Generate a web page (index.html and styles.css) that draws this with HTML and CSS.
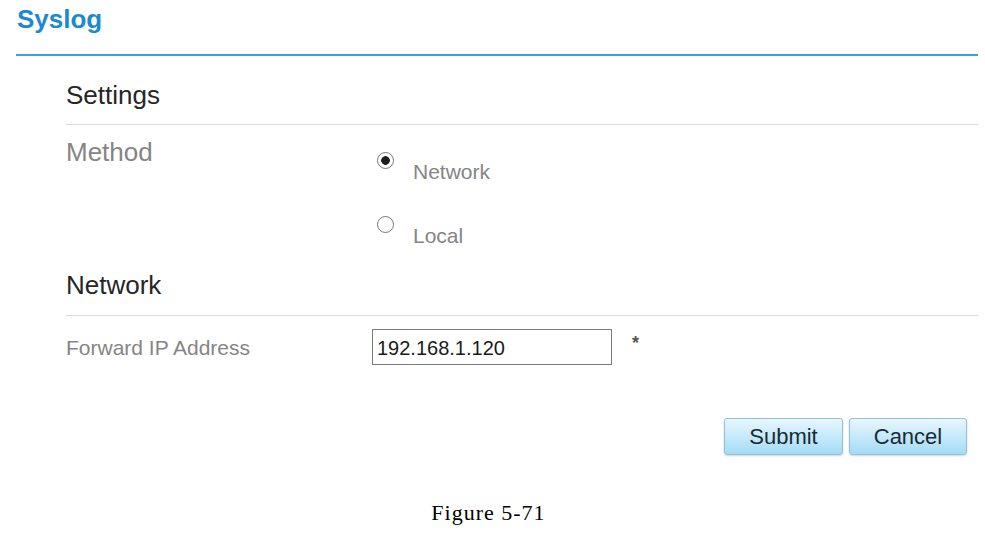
FILE: index.html
```html
<!DOCTYPE html>
<html lang="en">
<head>
<meta charset="utf-8">
<title>Syslog</title>
<link rel="stylesheet" href="styles.css">
</head>
<body>
<div class="page">
  <header class="title-bar">
    <h1 class="page-title">Syslog</h1>
  </header>
  <main class="content">
    <h2 class="section-title settings-title">Settings</h2>
    <div class="field-row method-row">
      <div class="field-label big-label">Method</div>
      <div class="radio-group">
        <label class="radio-option">
          <input class="radio" type="radio" name="method" checked>
          <span class="radio-text">Network</span>
        </label>
        <label class="radio-option second">
          <input class="radio" type="radio" name="method">
          <span class="radio-text">Local</span>
        </label>
      </div>
    </div>
    <h2 class="section-title network-title">Network</h2>
    <div class="field-row ip-row">
      <div class="field-label small-label">Forward IP Address</div>
      <input class="text-input" type="text" value="192.168.1.120">
      <span class="required">*</span>
    </div>
    <div class="actions">
      <button class="btn submit" type="button">Submit</button>
      <button class="btn cancel" type="button">Cancel</button>
    </div>
  </main>
  <p class="caption">Figure 5-71</p>
</div>
</body>
</html>
```
FILE: styles.css
```css
html, body {
  margin: 0;
  padding: 0;
  background: #ffffff;
}

body {
  font-family: "Liberation Sans", Arial, sans-serif;
  width: 985px;
  height: 534px;
  overflow: hidden;
}

.title-bar {
  margin: 0 7px 0 16px;
  padding-top: 4px;
  padding-bottom: 20px;
  border-bottom: 2px solid #3aa3dc;
}

.page-title {
  margin: 0;
  padding-left: 1px;
  font-size: 26px;
  line-height: 30px;
  font-weight: bold;
  color: #1b8ad3;
}

.content {
  margin: 0 7px 0 66px;
}

.section-title {
  margin: 0;
  font-size: 26px;
  line-height: 30px;
  font-weight: normal;
  color: #262626;
  border-bottom: 1px solid #d9d9d9;
}

.settings-title {
  margin-top: 24px;
  padding-bottom: 14px;
}

.network-title {
  margin-top: 22px;
  padding-bottom: 15px;
}

.field-row {
  display: grid;
  grid-template-columns: 306px auto auto;
  justify-content: start;
  align-items: start;
}

.method-row {
  margin-top: 12px;
}

.field-label {
  color: #858585;
}

.big-label {
  font-size: 26px;
  line-height: 30px;
}

.small-label {
  font-size: 21px;
  line-height: 24px;
  margin-top: 7px;
}

.radio-group {
  display: flex;
  flex-direction: column;
  padding-left: 5px;
  margin-top: 15px;
}

.radio-option {
  display: flex;
  align-items: flex-start;
  gap: 19px;
}

.radio-option.second {
  margin-top: 32px;
}

.radio {
  appearance: none;
  -webkit-appearance: none;
  margin: 0;
  width: 17px;
  height: 17px;
  border: 1px solid #777777;
  border-radius: 50%;
  background: #ffffff;
  box-sizing: border-box;
}

.radio:checked {
  background: radial-gradient(circle, #1e1e1e 0 4px, #ffffff 4.6px);
}

.radio-text {
  margin-top: 8px;
  font-size: 21px;
  line-height: 24px;
  color: #858585;
}

.ip-row {
  margin-top: 13px;
}

.text-input {
  width: 240px;
  height: 36px;
  box-sizing: border-box;
  margin: 0;
  padding: 2px 0 0 4px;
  border: 1px solid #7a7a7a;
  border-radius: 0;
  font-family: "Liberation Sans", Arial, sans-serif;
  font-size: 20px;
  color: #1a1a1a;
  background: #ffffff;
  outline: none;
}

.required {
  margin-left: 20px;
  margin-top: 4px;
  font-size: 18px;
  line-height: 20px;
  font-weight: bold;
  color: #555555;
}

.actions {
  display: flex;
  justify-content: flex-end;
  gap: 6px;
  margin-top: 53px;
  margin-right: 11px;
}

.btn {
  height: 37px;
  margin: 0;
  padding: 0;
  font-family: "Liberation Sans", Arial, sans-serif;
  font-size: 22px;
  color: #1b2a35;
  border: 1px solid #94bfd9;
  border-radius: 3px;
  background: linear-gradient(#e8f6fd 0%, #c9ebfb 45%, #a4dbf6 100%);
  box-shadow: 0 1px 2px rgba(0, 0, 0, 0.18);
}

.submit {
  width: 119px;
}

.cancel {
  width: 118px;
}

.caption {
  margin: 45px 0 0 0;
  padding-right: 8px;
  text-align: center;
  font-family: "Liberation Serif", "Times New Roman", serif;
  font-size: 22px;
  line-height: 26px;
  letter-spacing: 1px;
  color: #000000;
}
```
